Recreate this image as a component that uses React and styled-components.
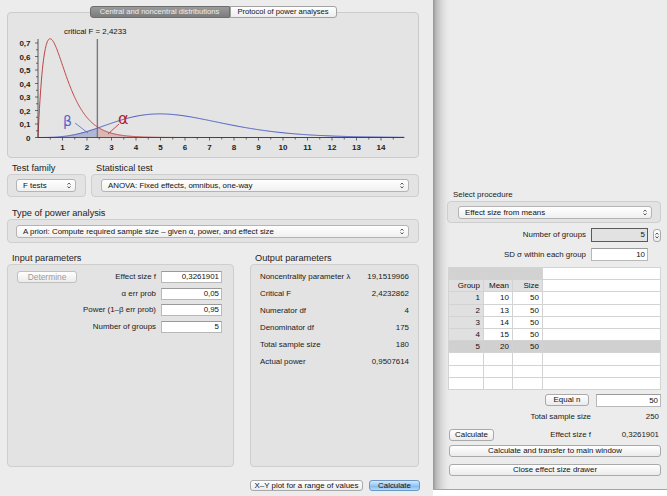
import React from "react";
import styled, { createGlobalStyle } from "styled-components";

const GlobalStyle = createGlobalStyle`
  html, body {
    margin: 0;
    padding: 0;
    background: #fff;
  }
  body {
    font-family: "Liberation Sans", Arial, sans-serif;
    color: #1a1a1a;
  }
  * {
    box-sizing: border-box;
  }
`;

const FS = 7.9; // small control text size

// --- math for the distribution plot ---
function lgamma(z) {
  const c = [
    0.99999999999980993, 676.5203681218851, -1259.1392167224028,
    771.32342877765313, -176.61502916214059, 12.507343278686905,
    -0.13857109526572012, 9.9843695780195716e-6, 1.5056327351493116e-7,
  ];
  if (z < 0.5) return Math.log(Math.PI / Math.sin(Math.PI * z)) - lgamma(1 - z);
  z -= 1;
  let x = c[0];
  for (let i = 1; i < 9; i++) x += c[i] / (z + i);
  const t = z + 7.5;
  return 0.5 * Math.log(2 * Math.PI) + (z + 0.5) * Math.log(t) - t + Math.log(x);
}

const fpdf = (x, a, b) =>
  x <= 0
    ? 0
    : Math.exp(
        (a / 2) * Math.log(a / b) +
          (a / 2 - 1) * Math.log(x) -
          ((a + b) / 2) * Math.log(1 + (a * x) / b) -
          (lgamma(a / 2) + lgamma(b / 2) - lgamma((a + b) / 2))
      );

const ncfpdf = (x, a, b, lam) => {
  let s = 0;
  for (let k = 0; k < 80; k++) {
    const w = Math.exp(-lam / 2 + k * Math.log(lam / 2) - lgamma(k + 1));
    const a2 = a + 2 * k;
    s += w * (a / a2) * fpdf((x * a) / a2, a2, b);
  }
  return s;
};

const X = (v) => 38 + v * 24.5;
const Y = (d) => 137.5 - d * 135;
const CRIT = 2.4233;
const central = (v) => fpdf(v, 4, 175);
const noncentral = (v) => ncfpdf(v, 4, 175, 19.1519966);

const curve = (fn, from, to, step = 0.04) => {
  const pts = [];
  for (let v = from; v < to; v += step) pts.push([X(v), Y(fn(v))]);
  pts.push([X(to), Y(fn(to))]);
  return pts;
};
const toPath = (pts) =>
  pts.map((p, i) => `${i ? "L" : "M"}${p[0].toFixed(2)},${p[1].toFixed(2)}`).join(" ");

const redPath = toPath(curve(central, 0, 14.95, 0.02));
const bluePath = toPath(curve(noncentral, 0, 14.95));
const betaArea =
  toPath(curve(noncentral, 0, CRIT)) + ` L${X(CRIT)},${Y(0)} L${X(0)},${Y(0)} Z`;
const alphaArea =
  `M${X(CRIT)},${Y(0)} ` +
  toPath(curve(central, CRIT, 14.95)).replace(/^M/, "L") +
  ` L${X(14.95)},${Y(0)} Z`;

// --- layout ---
const Screen = styled.div`
  display: flex;
  width: 667px;
  height: 496px;
  overflow: hidden;
`;

const MainWindow = styled.div`
  width: 433px;
  height: 496px;
  flex-shrink: 0;
  background: #ececec;
  padding: 6px 14px 0 7px;
  display: flex;
  flex-direction: column;
`;

const TabBar = styled.div`
  display: flex;
  justify-content: center;
  height: 12px;
  position: relative;
  z-index: 1;
`;

const Tab = styled.div`
  width: ${(p) => p.$w}px;
  height: 12px;
  font-size: 7.6px;
  line-height: 10px;
  text-align: center;
  white-space: nowrap;
  border: 1px solid ${(p) => (p.$active ? "#6e6e6e" : "#a2a2a2")};
  border-radius: ${(p) => (p.$active ? "3px 0 0 3px" : "0 3px 3px 0")};
  color: ${(p) => (p.$active ? "#eeeeee" : "#111")};
  background: ${(p) =>
    p.$active
      ? "linear-gradient(#9a9a9a, #7c7c7c)"
      : "linear-gradient(#ffffff, #ededed)"};
`;

const ChartPanel = styled.div`
  margin-top: -6px;
  height: 146px;
  border: 1px solid #cbcbcb;
  border-radius: 4px;
  background: #e4e4e4;
  overflow: hidden;
`;

const Row = styled.div`
  display: flex;
  gap: ${(p) => p.$gap || 5}px;
  margin-top: ${(p) => p.$mt}px;
`;

const Group = styled.div`
  display: flex;
  flex-direction: column;
  width: ${(p) => (p.$w ? `${p.$w}px` : "auto")};
  flex: ${(p) => (p.$w ? "none" : "1")};
`;

const GroupLabel = styled.div`
  height: 12px;
  line-height: 12px;
  font-size: ${(p) => p.$size || 9.2}px;
  padding-left: ${(p) => p.$pl || 5}px;
  color: #222;
  white-space: nowrap;
`;

const GroupBox = styled.div`
  height: ${(p) => p.$h}px;
  border: 1px solid #cecece;
  border-radius: 4px;
  background: #e3e3e3;
  padding: ${(p) => p.$pad || "0"};
  display: ${(p) => (p.$center ? "flex" : "block")};
  align-items: center;
`;

const SelectBox = styled.div`
  display: flex;
  align-items: center;
  justify-content: space-between;
  width: ${(p) => (p.$w ? `${p.$w}px` : "100%")};
  height: 13px;
  padding: 0 4px 0 6px;
  background: linear-gradient(#ffffff, #f0f0f0);
  border: 1px solid #b4b4b4;
  border-radius: 3px;
  font-size: ${FS}px;
  white-space: nowrap;
  color: #111;
`;

const Arrows = () => (
  <svg width="4" height="7" viewBox="0 0 4 7">
    <path d="M0.5 2.6 L2 1 L3.5 2.6 M0.5 4.4 L2 6 L3.5 4.4" fill="none" stroke="#333" strokeWidth="0.8" />
  </svg>
);

const Select = ({ w, children }) => (
  <SelectBox $w={w}>
    <span>{children}</span>
    <Arrows />
  </SelectBox>
);

const InputGrid = styled.div`
  display: grid;
  grid-template-columns: 60px 1fr 61px;
  grid-auto-rows: 12px;
  column-gap: 5px;
  row-gap: 4.6px;
  padding: 6px 11px 0 9px;
`;

const FieldLabel = styled.div`
  grid-column: ${(p) => p.$col || 2};
  text-align: right;
  font-size: ${FS}px;
  line-height: 12px;
  white-space: nowrap;
  color: #1a1a1a;
`;

const Field = styled.div`
  height: ${(p) => p.$h || 12}px;
  line-height: ${(p) => (p.$h || 12) - 2}px;
  border: 1px solid ${(p) => (p.$readonly ? "#5a5a5a" : "#b8b8b8")};
  border-top-color: ${(p) => (p.$readonly ? "#5a5a5a" : "#9a9a9a")};
  background: ${(p) => (p.$readonly ? "#e2e2e2" : "#fff")};
  text-align: right;
  padding-right: 2px;
  font-size: ${FS}px;
  color: #111;
`;

const Button = styled.div`
  width: ${(p) => (p.$w ? `${p.$w}px` : "auto")};
  height: ${(p) => p.$h || 12}px;
  line-height: ${(p) => (p.$h || 12) - 2}px;
  text-align: center;
  white-space: nowrap;
  font-size: ${(p) => p.$size || FS}px;
  color: ${(p) => (p.$disabled ? "#9c9c9c" : "#111")};
  background: ${(p) =>
    p.$primary
      ? "linear-gradient(#d4e8fc, #9ac8f4 50%, #7db6ee 51%, #b4dafc)"
      : "linear-gradient(#ffffff, #ebebeb)"};
  border: 1px solid ${(p) => (p.$primary ? "#6f97c6" : p.$disabled ? "#c0c0c0" : "#a9a9a9")};
  border-radius: 3px;
  margin-left: ${(p) => p.$ml || 0}px;
  margin-top: ${(p) => p.$mt || 0}px;
`;

const OutputList = styled.div`
  display: flex;
  flex-direction: column;
  gap: 5px;
  padding: 6px 9px 0 9px;
`;

const OutputRow = styled.div`
  display: flex;
  justify-content: space-between;
  height: 12px;
  line-height: 12px;
  font-size: ${FS}px;
  color: #1a1a1a;
`;

const ButtonRow = styled.div`
  display: flex;
  justify-content: flex-end;
  gap: 6px;
  margin-top: 13px;
  margin-right: -1px;
`;

// --- drawer ---
const Drawer = styled.div`
  flex: 1;
  height: 490px;
  background: linear-gradient(
    to right,
    #959595 0px,
    #b9b9b9 3px,
    #d6d6d6 8px,
    #e6e6e6 13px,
    #ececec 17px
  );
  border-bottom: 1px solid #a5a5a5;
  padding: 189px 6px 0 14px;
  display: flex;
  flex-direction: column;
`;

const SideGrid = styled.div`
  display: grid;
  grid-template-columns: 1fr 57px 8px;
  grid-template-rows: 14px 13px;
  column-gap: 5px;
  row-gap: 6px;
  margin-top: 5px;
  align-items: center;
`;

const Stepper = styled.div`
  width: 8px;
  height: 13px;
  border: 1px solid #aaa;
  border-radius: 3px;
  background: linear-gradient(#fff, #eaeaea);
  display: flex;
  align-items: center;
  justify-content: center;
`;

const Table = styled.table`
  width: 213px;
  margin: 6px 0 0 1px;
  border-collapse: collapse;
  table-layout: fixed;
  font-size: 8px;
  background: #fff;
  border: 1px solid #c9c9c9;
`;

const Cell = styled.td`
  height: 12.2px;
  padding: 0 3px 0 0;
  line-height: 11px;
  text-align: right;
  white-space: nowrap;
  border: 1px solid #d3d3d3;
  color: #111;
  background: ${(p) =>
    p.$tone === "bar"
      ? "#d2d2d2"
      : p.$tone === "head"
      ? "#e0e0e0"
      : p.$tone === "sel"
      ? "#d0d0d0"
      : "#ffffff"};
`;

const ResultGrid = styled.div`
  display: grid;
  grid-template-columns: 1fr 65px;
  grid-template-rows: 13px 12px 12px;
  column-gap: 5px;
  row-gap: 4px;
  margin-top: 4px;
  align-items: center;
  font-size: ${FS}px;
  & > :nth-child(5),
  & > :nth-child(6) {
    margin-top: 4px;
  }
`;

const ResultLeft = styled.div`
  display: flex;
  align-items: center;
  justify-content: ${(p) => p.$justify || "flex-end"};
  padding-right: ${(p) => p.$pr || 0}px;
  padding-left: 2px;
  white-space: nowrap;
`;

const ResultValue = styled.div`
  text-align: right;
  padding-right: 2px;
`;

const groups = [
  [1, 10, 50],
  [2, 13, 50],
  [3, 14, 50],
  [4, 15, 50],
  [5, 20, 50],
];

const Chart = () => {
  const xTicks = [];
  for (let i = 1; i <= 14; i++) xTicks.push(i);
  const yLabels = ["0", "0,1", "0,2", "0,3", "0,4", "0,5", "0,6", "0,7"];
  return (
    <svg width="410" height="144" viewBox="8 13 410 144" style={{ display: "block" }}>
      <path d={betaArea} fill="rgba(70,90,170,0.32)" />
      <path d={alphaArea} fill="rgba(190,70,70,0.28)" />
      <line x1={X(CRIT)} y1="39" x2={X(CRIT)} y2={Y(0)} stroke="#7a7a7a" strokeWidth="1.4" />
      <path d={bluePath} fill="none" stroke="#4b5bc4" strokeWidth="1" />
      <path d={redPath} fill="none" stroke="#bf4343" strokeWidth="1" />
      <line x1="38" y1="39" x2="38" y2={Y(0)} stroke="#333" strokeWidth="0.8" />
      <line x1="38" y1={Y(0)} x2="404" y2={Y(0)} stroke="#333" strokeWidth="0.8" />
      {Array.from({ length: 15 }, (_, i) => (
        <line
          key={`y${i}`}
          x1={i % 2 === 0 ? 35 : 36}
          x2="38"
          y1={Y(i * 0.05)}
          y2={Y(i * 0.05)}
          stroke="#333"
          strokeWidth="0.7"
        />
      ))}
      {Array.from({ length: 29 }, (_, i) => (
        <line
          key={`x${i}`}
          x1={X((i + 1) * 0.5)}
          x2={X((i + 1) * 0.5)}
          y1={Y(0)}
          y2={Y(0) + (i % 2 === 1 ? 3 : 2)}
          stroke="#333"
          strokeWidth="0.7"
        />
      ))}
      <g fontFamily="'Liberation Sans', Arial, sans-serif" fontSize="8" fontWeight="bold" fill="#222">
        {yLabels.map((t, i) => (
          <text key={t} x="30.5" y={Y(i * 0.1) + 3} textAnchor="end">
            {t}
          </text>
        ))}
        {xTicks.map((t) => (
          <text key={t} x={X(t)} y="150" textAnchor="middle">
            {t}
          </text>
        ))}
        <text x="64" y="34" fontWeight="normal" fontSize="7.9" fill="#111">
          critical F = 2,4233
        </text>
      </g>
      <line x1="75" y1="123" x2="88" y2="133" stroke="#6373cc" strokeWidth="0.9" />
      <line x1="119" y1="124" x2="108" y2="134" stroke="#b83a3a" strokeWidth="0.9" />
      <text x="63" y="126" fontFamily="'DejaVu Sans', sans-serif" fontSize="14" fill="#5565d0">
        β
      </text>
      <text x="118" y="124" fontFamily="'DejaVu Sans', sans-serif" fontSize="16" fill="#b32424">
        α
      </text>
    </svg>
  );
};

export default function App() {
  return (
    <>
      <GlobalStyle />
      <Screen>
        <MainWindow>
          <TabBar>
            <Tab $active $w={140}>Central and noncentral distributions</Tab>
            <Tab $w={107}>Protocol of power analyses</Tab>
          </TabBar>
          <ChartPanel>
            <Chart />
          </ChartPanel>

          <Row $mt={4}>
            <Group $w={79}>
              <GroupLabel>Test family</GroupLabel>
              <GroupBox $h={23} $pad="0 0 0 8px" $center>
                <Select w={60}>F tests</Select>
              </GroupBox>
            </Group>
            <Group>
              <GroupLabel>Statistical test</GroupLabel>
              <GroupBox $h={23} $pad="0 9px" $center>
                <Select>ANOVA: Fixed effects, omnibus, one-way</Select>
              </GroupBox>
            </Group>
          </Row>

          <Row $mt={10}>
            <Group>
              <GroupLabel>Type of power analysis</GroupLabel>
              <GroupBox $h={24} $pad="0 9px 0 8px" $center>
                <Select>A priori: Compute required sample size – given α, power, and effect size</Select>
              </GroupBox>
            </Group>
          </Row>

          <Row $mt={9} $gap={16}>
            <Group $w={227}>
              <GroupLabel>Input parameters</GroupLabel>
              <GroupBox $h={203}>
                <InputGrid>
                  <Button $disabled $w={60} $size={8.4}>Determine</Button>
                  <FieldLabel>Effect size f</FieldLabel>
                  <Field>0,3261901</Field>
                  <FieldLabel>α err prob</FieldLabel>
                  <Field>0,05</Field>
                  <FieldLabel>Power (1–β err prob)</FieldLabel>
                  <Field>0,95</Field>
                  <FieldLabel>Number of groups</FieldLabel>
                  <Field>5</Field>
                </InputGrid>
              </GroupBox>
            </Group>
            <Group>
              <GroupLabel>Output parameters</GroupLabel>
              <GroupBox $h={203}>
                <OutputList>
                  <OutputRow><span>Noncentrality parameter λ</span><span>19,1519966</span></OutputRow>
                  <OutputRow><span>Critical F</span><span>2,4232862</span></OutputRow>
                  <OutputRow><span>Numerator df</span><span>4</span></OutputRow>
                  <OutputRow><span>Denominator df</span><span>175</span></OutputRow>
                  <OutputRow><span>Total sample size</span><span>180</span></OutputRow>
                  <OutputRow><span>Actual power</span><span>0,9507614</span></OutputRow>
                </OutputList>
              </GroupBox>
            </Group>
          </Row>

          <ButtonRow>
            <Button $w={113} $h={11}>X–Y plot for a range of values</Button>
            <Button $w={51} $h={11} $primary>Calculate</Button>
          </ButtonRow>
        </MainWindow>

        <Drawer>
          <GroupLabel $size={FS} $pl={6}>Select procedure</GroupLabel>
          <GroupBox $h={22} $pad="0 8px 0 10px" $center>
            <Select>Effect size from means</Select>
          </GroupBox>

          <SideGrid>
            <FieldLabel $col={1}>Number of groups</FieldLabel>
            <Field $readonly $h={14}>5</Field>
            <Stepper><Arrows /></Stepper>
            <FieldLabel $col={1}>SD σ within each group</FieldLabel>
            <Field $h={13}>10</Field>
          </SideGrid>

          <Table>
            <colgroup>
              <col style={{ width: 35 }} />
              <col style={{ width: 29 }} />
              <col style={{ width: 30 }} />
              <col />
            </colgroup>
            <tbody>
              <tr>
                <Cell $tone="bar" />
                <Cell $tone="bar" />
                <Cell $tone="bar" />
                <Cell />
              </tr>
              <tr>
                <Cell $tone="head">Group</Cell>
                <Cell $tone="head">Mean</Cell>
                <Cell $tone="head">Size</Cell>
                <Cell />
              </tr>
              {groups.map(([g, m, s]) => {
                const sel = g === 5;
                return (
                  <tr key={g}>
                    <Cell $tone={sel ? "sel" : "head"}>{g}</Cell>
                    <Cell $tone={sel ? "sel" : undefined}>{m}</Cell>
                    <Cell $tone={sel ? "sel" : undefined}>{s}</Cell>
                    <Cell $tone={sel ? "sel" : undefined} />
                  </tr>
                );
              })}
              {[0, 1, 2].map((i) => (
                <tr key={`e${i}`}>
                  <Cell />
                  <Cell />
                  <Cell />
                  <Cell />
                </tr>
              ))}
            </tbody>
          </Table>

          <ResultGrid>
            <ResultLeft $pr={2}>
              <Button $w={44} $h={12}>Equal n</Button>
            </ResultLeft>
            <Field $h={13}>50</Field>
            <ResultLeft>Total sample size</ResultLeft>
            <ResultValue>250</ResultValue>
            <ResultLeft $justify="space-between">
              <Button $w={45} $h={12}>Calculate</Button>
              <span>Effect size f</span>
            </ResultLeft>
            <ResultValue>0,3261901</ResultValue>
          </ResultGrid>

          <Button $h={12} $ml={2} $mt={6}>Calculate and transfer to main window</Button>
          <Button $h={12} $ml={2} $mt={7}>Close effect size drawer</Button>
        </Drawer>
      </Screen>
    </>
  );
}
